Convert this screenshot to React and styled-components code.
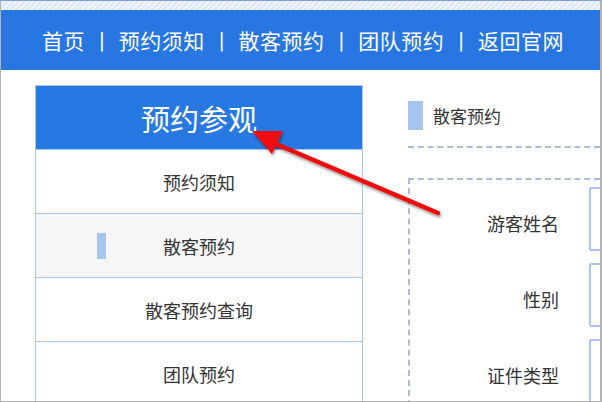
import React from "react";
import styled, { createGlobalStyle } from "styled-components";

const navItems = ["首页", "预约须知", "散客预约", "团队预约", "返回官网"];
const menuItems = ["预约须知", "散客预约", "散客预约查询", "团队预约"];
const fields = ["游客姓名", "性别", "证件类型"];

function App() {
  return (
    <>
      <GlobalStyle />
      <Frame>
        <Stripes />
        <Nav>
          {navItems.map((item, index) => (
            <React.Fragment key={item}>
              {index > 0 && <Separator>|</Separator>}
              <NavLink>{item}</NavLink>
            </React.Fragment>
          ))}
        </Nav>
        <Body>
          <Sidebar>
            <SidebarHeader>预约参观</SidebarHeader>
            {menuItems.map((item) => (
              <MenuItem key={item} active={item === "散客预约"}>
                {item}
              </MenuItem>
            ))}
          </Sidebar>
          <Main>
            <TitleBar>
              <TitleMark />
              <Title>散客预约</Title>
            </TitleBar>
            <FormBox>
              {fields.map((field) => (
                <FormRow key={field}>
                  <Label>{field}</Label>
                  <Input />
                </FormRow>
              ))}
            </FormBox>
          </Main>
        </Body>
        <Arrow viewBox="0 0 602 402">
          <defs>
            <filter id="shadow" x="-20%" y="-20%" width="140%" height="140%">
              <feDropShadow dx="1" dy="2" stdDeviation="1.6" floodColor="#000" floodOpacity="0.45" />
            </filter>
          </defs>
          <g filter="url(#shadow)" fill="#ee0a0a" stroke="none">
            <line x1="437" y1="212" x2="268" y2="140" stroke="#ee0a0a" strokeWidth="4.5" strokeLinecap="round" />
            <polygon points="251,130 282,130 271,153" />
          </g>
        </Arrow>
      </Frame>
    </>
  );
}

const GlobalStyle = createGlobalStyle`
  html, body {
    margin: 0;
    padding: 0;
    background: #ffffff;
  }

  body {
    font-family: "Microsoft YaHei", "Noto Sans CJK SC", sans-serif;
  }
`;

const Frame = styled.div`
  position: relative;
  width: 602px;
  height: 402px;
  box-sizing: border-box;
  overflow: hidden;
  background: #ffffff;
  border-top: 1px solid #7d9fd3;
  border-left: 1px solid #b4b4b4;
  border-right: 2px solid #b4b4b4;
  border-bottom: 1px solid #b4b4b4;
`;

const Stripes = styled.div`
  height: 9px;
  background: repeating-linear-gradient(
    135deg,
    #dde8f7 0px,
    #dde8f7 2px,
    #f1f5fc 2px,
    #f1f5fc 4px
  );
`;

const Nav = styled.nav`
  display: flex;
  align-items: center;
  height: 60px;
  padding-left: 41px;
  background: #2876e2;
  color: #ffffff;
  font-size: 21px;
`;

const NavLink = styled.span`
  letter-spacing: 0.5px;
`;

const Separator = styled.span`
  margin: 0 13.5px;
  font-family: "DejaVu Sans", sans-serif;
  font-size: 20px;
`;

const Body = styled.div`
  display: flex;
  align-items: flex-start;
  padding: 15px 0 0 34px;
`;

const Sidebar = styled.aside`
  flex: none;
  width: 328px;
  box-sizing: border-box;
  border-left: 1px solid #a9c8f0;
  border-right: 1px solid #a9c8f0;
  border-top: 1px solid #a9c8f0;
`;

const SidebarHeader = styled.div`
  display: flex;
  align-items: center;
  justify-content: center;
  height: 63px;
  border-bottom: 1px solid #a9c8f0;
  background: #2878e2;
  color: #ffffff;
  font-size: 29px;
`;

const MenuItem = styled.div`
  position: relative;
  display: flex;
  align-items: center;
  justify-content: center;
  height: 63px;
  border-bottom: 1px solid #a9c8f0;
  background: ${(p) => (p.active ? "#f6f6f6" : "#ffffff")};
  color: #333333;
  font-size: 18px;

  &::before {
    content: "";
    display: ${(p) => (p.active ? "block" : "none")};
    position: absolute;
    left: 61px;
    top: 19px;
    width: 9px;
    height: 26px;
    background: #a6c6f0;
  }
`;

const Main = styled.section`
  flex: 1;
  min-width: 0;
  margin-left: 45px;
`;

const TitleBar = styled.div`
  display: flex;
  align-items: center;
  height: 61px;
  border-bottom: 2px dashed #a9bcd8;
`;

const TitleMark = styled.span`
  width: 15px;
  height: 29px;
  margin-right: 10px;
  background: #a6c6f0;
`;

const Title = styled.span`
  color: #333333;
  font-size: 17px;
`;

const FormBox = styled.div`
  display: flex;
  flex-direction: column;
  gap: 12px;
  margin-top: 30px;
  padding-top: 7px;
  height: 300px;
  border-top: 2px dashed #a9bcd8;
  border-left: 2px dashed #a9bcd8;
`;

const FormRow = styled.div`
  display: grid;
  grid-template-columns: 149px 1fr;
  column-gap: 30px;
  align-items: center;
`;

const Label = styled.span`
  padding-top: 8px;
  text-align: right;
  color: #333333;
  font-size: 18px;
`;

const Input = styled.div`
  width: 200px;
  height: 60px;
  border: 2px solid #a9c8f0;
  border-radius: 2px;
`;

const Arrow = styled.svg`
  position: absolute;
  left: 0;
  top: 0;
  width: 602px;
  height: 402px;
  pointer-events: none;
`;

export default App;
